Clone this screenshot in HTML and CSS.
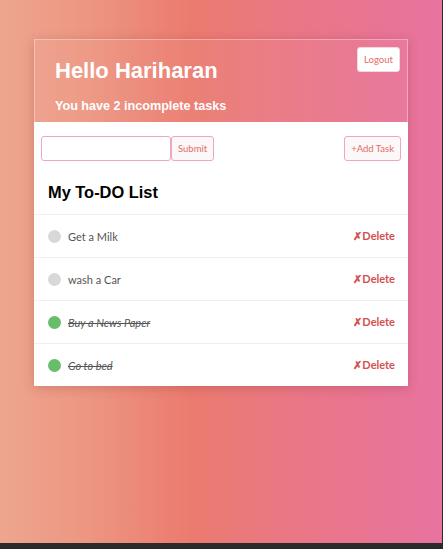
FILE: index.html
```html
<!DOCTYPE html>
<html>
<head>
<meta charset="utf-8">
<link rel="stylesheet" href="styles.css">
</head>
<body>
<div class="page">
  <div class="card">
    <div class="card-header">
      <div class="greet">
        <h1 class="title">Hello Hariharan</h1>
        <p class="subtitle">You have 2 incomplete tasks</p>
      </div>
      <button class="btn logout">Logout</button>
    </div>
    <div class="card-body">
      <div class="toolbar">
        <div class="form">
          <input class="task-input" type="text">
          <button class="btn outline">Submit</button>
        </div>
        <button class="btn outline">+Add Task</button>
      </div>
      <h2 class="list-title">My To-DO List</h2>
      <ul class="list">
        <li class="item"><span class="dot"></span><span class="text">Get a Milk</span><span class="del">✗Delete</span></li>
        <li class="item"><span class="dot"></span><span class="text">wash a Car</span><span class="del">✗Delete</span></li>
        <li class="item done"><span class="dot"></span><span class="text">Buy a News Paper</span><span class="del">✗Delete</span></li>
        <li class="item done"><span class="dot"></span><span class="text">Go to bed</span><span class="del">✗Delete</span></li>
      </ul>
    </div>
  </div>
</div>
</body>
</html>
```
FILE: styles.css
```css
html {
  background: #2b2b2b;
}
body {
  margin: 0;
  height: 543px;
  margin-right: 1px;
  background: linear-gradient(90deg, #eea68e 0%, #ed9682 20%, #eb7b6f 43%, #ea7880 60%, #e97590 80%, #e873a0 100%);
  font-family: "Liberation Sans", Arial, sans-serif;
}
.page {
  padding-top: 39px;
  display: flex;
  justify-content: center;
}
.card {
  width: 374px;
  box-shadow: 0 2px 10px rgba(120, 40, 40, 0.25);
}
.card-header {
  height: 83px;
  box-sizing: border-box;
  border: 1px solid rgba(255, 255, 255, 0.35);
  border-bottom: none;
  background: rgba(255, 255, 255, 0.04);
  display: flex;
  justify-content: space-between;
  padding: 7px 7px 0 20px;
}
.greet {
  padding-top: 11px;
}
.title {
  margin: 0;
  font-size: 22px;
  font-weight: bold;
  color: #fff;
  line-height: 26px;
}
.subtitle {
  margin: 14px 0 0;
  font-size: 12.6px;
  font-weight: bold;
  color: #fff;
  line-height: 16px;
}
.btn {
  font-family: "Lato", "Noto Sans", sans-serif;
  font-size: 9.5px;
  color: #e26c67;
  border-radius: 3px;
  cursor: pointer;
}
.logout {
  background: #fff;
  border: 1px solid #f3dada;
  height: 25px;
  width: 43px;
  padding: 0;
}
.card-body {
  background: #fff;
}
.toolbar {
  display: flex;
  justify-content: space-between;
  align-items: center;
  padding: 14px 7px 0;
}
.form {
  display: flex;
}
.task-input {
  width: 130px;
  height: 25px;
  box-sizing: border-box;
  border: 1px solid #e9a8c6;
  border-radius: 3px;
  padding: 0 4px;
  outline: none;
}
.outline {
  background: #fcf8f8;
  border: 1px solid #eca8c0;
  height: 25px;
  padding: 0 6px;
}
.list-title {
  margin: 0;
  padding: 21px 14px 12px;
  font-size: 16.4px;
  font-weight: bold;
  color: #000;
  line-height: 20px;
}
.list {
  list-style: none;
  margin: 0;
  padding: 0;
}
.item {
  display: flex;
  align-items: center;
  height: 43px;
  box-sizing: border-box;
  border-top: 1px solid #efefef;
  padding: 0 13px 0 14px;
  font-family: "Lato", "Noto Sans", sans-serif;
  font-size: 11px;
  color: #555;
}
.dot {
  width: 13px;
  height: 13px;
  border-radius: 50%;
  background: #d8d8d8;
  margin-right: 7px;
}
.text {
  flex: 1;
}
.done .dot {
  background: #67bd68;
}
.done .text {
  font-style: italic;
  text-decoration: line-through;
}
.del {
  color: #d4504f;
  font-weight: bold;
  font-size: 11px;
}
```
